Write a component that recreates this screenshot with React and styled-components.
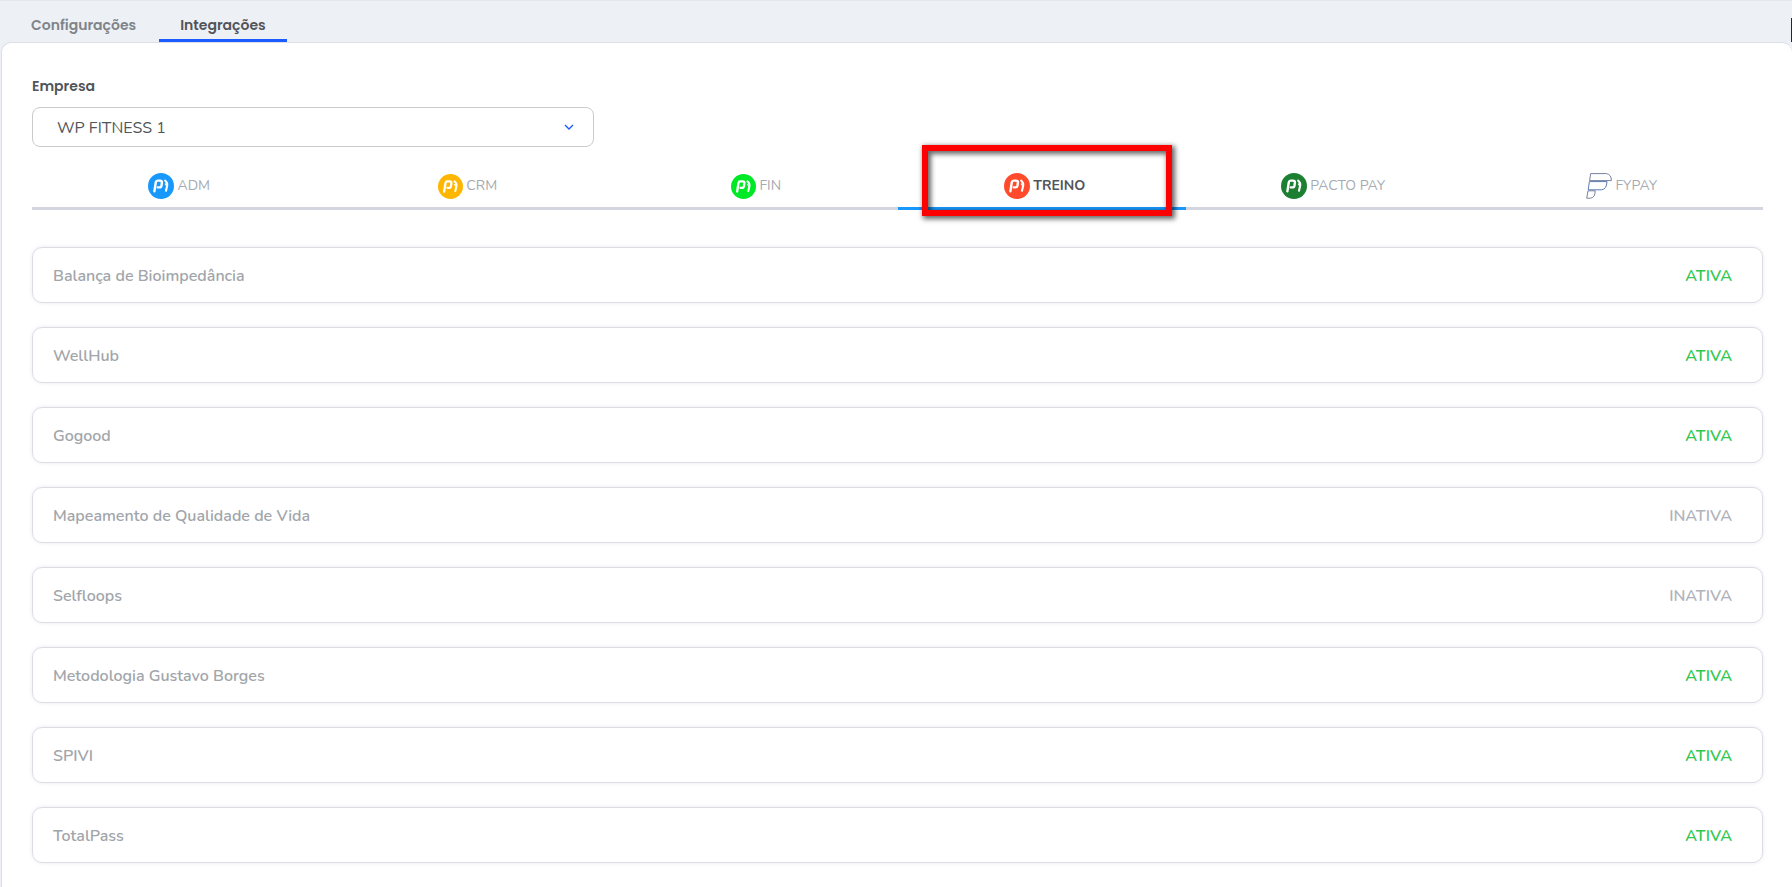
import React, { useState } from "react";
import styled, { createGlobalStyle } from "styled-components";

const GlobalStyle = createGlobalStyle`
    * { box-sizing: border-box; }
    body {
        margin: 0;
        background: #edf1f6;
        font-family: Nunito, "Open Sans", sans-serif;
    }
`;

const Page = styled.div`
    min-height: 100vh;
    display: flex;
    flex-direction: column;
    border-top: 1px solid #e3e6eb;
`;

const TopBar = styled.header`
    height: 41px;
    display: flex;
    justify-content: space-between;
    align-items: flex-end;
    padding-left: 10px;
`;

const TopTabs = styled.nav`
    display: flex;
    gap: 2px;
`;

const TopTab = styled.a`
    height: 33px;
    padding: 4px 21px 0;
    font-family: Poppins, Inter, sans-serif;
    font-size: 14px;
    font-weight: 600;
    line-height: 24px;
    text-decoration: none;
    color: ${(props) => (props.$active ? "#51555a" : "#7f8489")};
    border-bottom: 3px solid ${(props) => (props.$active ? "#1a5cff" : "transparent")};
    border-radius: 2px 2px 0 0;
`;

const SideButton = styled.button`
    width: 1px;
    height: 24px;
    padding: 0;
    border: 0;
    background: #1b2550;
`;

const Panel = styled.main`
    flex: 1;
    margin-left: 1px;
    padding: 31px 29px 24px 30px;
    background: #fff;
    border: 1px solid #dcdfe5;
    border-width: 1px 0 0 1px;
    border-radius: 10px 10px 0 0;
`;

const Label = styled.label`
    display: block;
    margin-bottom: 9px;
    font-family: Poppins, Inter, sans-serif;
    font-size: 14px;
    font-weight: 600;
    line-height: 24px;
    color: #51555a;
`;

const SelectBox = styled.div`
    display: grid;
    align-items: center;
    width: calc((100% - 45px) / 3);

    & > * { grid-area: 1 / 1; }
    svg {
        justify-self: end;
        margin-right: 20px;
        pointer-events: none;
    }
`;

const Select = styled.select`
    width: 100%;
    height: 40px;
    padding: 2px 24px 0;
    appearance: none;
    border: 1px solid #c9cbcf;
    border-radius: 8px;
    background: #fff;
    font-family: Nunito, "Open Sans", sans-serif;
    font-size: 16px;
    color: #51555a;
`;

const ModuleTabs = styled.div`
    display: grid;
    grid-template-columns: repeat(6, 1fr);
    margin-top: 13px;
`;

const ModuleTab = styled.button`
    position: relative;
    height: 50px;
    display: flex;
    align-items: center;
    justify-content: center;
    gap: 3px;
    padding: 5px 0 0 6px;
    border: 0;
    border-bottom: 3px solid ${(props) => (props.$active ? "#1998fc" : "#d3d5e0")};
    background: none;
    font-family: Nunito, "Open Sans", sans-serif;
    font-size: 14px;
    font-weight: ${(props) => (props.$active ? 700 : 400)};
    line-height: 20px;
    color: ${(props) => (props.$active ? "#51555a" : "#a6aab1")};
    cursor: pointer;
`;

const Highlight = styled.span`
    position: absolute;
    inset: -15px 14px -9px 24px;
    border: 6px solid #f00;
    box-shadow: 2px 2px 5px 1px rgba(0, 0, 0, 0.6), inset 2px 2px 5px 1px rgba(0, 0, 0, 0.6);
    pointer-events: none;
`;

const List = styled.ul`
    display: flex;
    flex-direction: column;
    gap: 24px;
    margin: 37px 0 0;
    padding: 0;
    list-style: none;
`;

const Item = styled.li`
    height: 56px;
    display: flex;
    align-items: center;
    justify-content: space-between;
    padding: 2px 30px 0 20px;
    border: 1px solid #dcdde3;
    border-radius: 10px;
    box-shadow: 0 0 4px #e9eaf1;
    font-size: 16px;
    font-weight: 600;
    line-height: 24px;
    color: #a1a5aa;
`;

const Status = styled.span`
    color: ${(props) => (props.$active ? "#2ec750" : "#afb3b9")};
`;

const modules = [
    { name: "ADM", color: "#1998fc", size: 26 },
    { name: "CRM", color: "#ffb600", size: 25 },
    { name: "FIN", color: "#00e927", size: 25 },
    { name: "TREINO", color: "#ff4b2b", size: 26, marked: true },
    { name: "PACTO PAY", color: "#1c7f31", size: 26 },
    { name: "FYPAY" },
];

const integrations = [
    { name: "Balança de Bioimpedância", active: true },
    { name: "WellHub", active: true },
    { name: "Gogood", active: true },
    { name: "Mapeamento de Qualidade de Vida", active: false },
    { name: "Selfloops", active: false },
    { name: "Metodologia Gustavo Borges", active: true },
    { name: "SPIVI", active: true },
    { name: "TotalPass", active: true },
];

function PactoIcon(props) {
    return (
        <svg width={props.size} height={props.size} viewBox="0 0 26 26" fill="none" aria-hidden="true">
            <circle cx="13" cy="13" r="13" fill={props.color} />
            <g stroke="#fff" strokeWidth="2.4" strokeLinecap="round" strokeLinejoin="round">
                <path d="M6.4 18.2 L7.8 9.2 Q8.1 7.6 9.6 7.6 H12 Q14.2 7.6 13.9 9.5 L13.5 12.5 Q13.2 14.4 11.3 14.4 H9.8" />
                <path d="M17.2 7.6 L18.8 9.6 Q19.5 10.8 19.2 12.4 L18 17.8" strokeWidth="2.1" />
                <path d="M17.3 10.9 L18.6 12.6" strokeWidth="1.3" />
            </g>
        </svg>
    );
}

function FypayIcon() {
    return (
        <svg width="26" height="26" viewBox="0 0 26 26" fill="none" strokeWidth="1" aria-hidden="true">
            <path d="M4.7 0.6 H20.5 Q25.5 1.6 25.4 7.6 H3.6 Z" stroke="#77819f" />
            <path d="M3.4 8.6 H21 Q20.6 16.3 15.5 16.8 H2.2 Z" stroke="#5b7db8" />
            <path d="M2 17.8 H9.2 Q9.2 24.6 4.5 25.2 H0.7 Z" stroke="#77819f" />
        </svg>
    );
}

function App() {
    const [current, setCurrent] = useState("TREINO");

    return (
        <>
            <GlobalStyle />
            <Page>
                <TopBar>
                    <TopTabs>
                        <TopTab href="#configuracoes">Configurações</TopTab>
                        <TopTab href="#integracoes" $active>Integrações</TopTab>
                    </TopTabs>
                    <SideButton aria-label="Abrir menu" />
                </TopBar>
                <Panel>
                    <Label htmlFor="empresa">Empresa</Label>
                    <SelectBox>
                        <Select id="empresa">
                            <option>WP FITNESS 1</option>
                        </Select>
                        <svg width="10" height="6" viewBox="0 0 10 6" fill="none" aria-hidden="true">
                            <path d="M1 1 L5 5 L9 1" stroke="#1a5cff" strokeWidth="1.4" />
                        </svg>
                    </SelectBox>
                    <ModuleTabs role="tablist">
                        {modules.map((item) => (
                            <ModuleTab
                                key={item.name}
                                role="tab"
                                aria-selected={current === item.name}
                                $active={current === item.name}
                                onClick={() => setCurrent(item.name)}
                            >
                                {item.color ? <PactoIcon color={item.color} size={item.size} /> : <FypayIcon />}
                                <span>{item.name}</span>
                                {item.marked ? <Highlight /> : null}
                            </ModuleTab>
                        ))}
                    </ModuleTabs>
                    <List>
                        {integrations.map((item) => (
                            <Item key={item.name}>
                                <span>{item.name}</span>
                                <Status $active={item.active}>{item.active ? "ATIVA" : "INATIVA"}</Status>
                            </Item>
                        ))}
                    </List>
                </Panel>
            </Page>
        </>
    );
}

export default App;
